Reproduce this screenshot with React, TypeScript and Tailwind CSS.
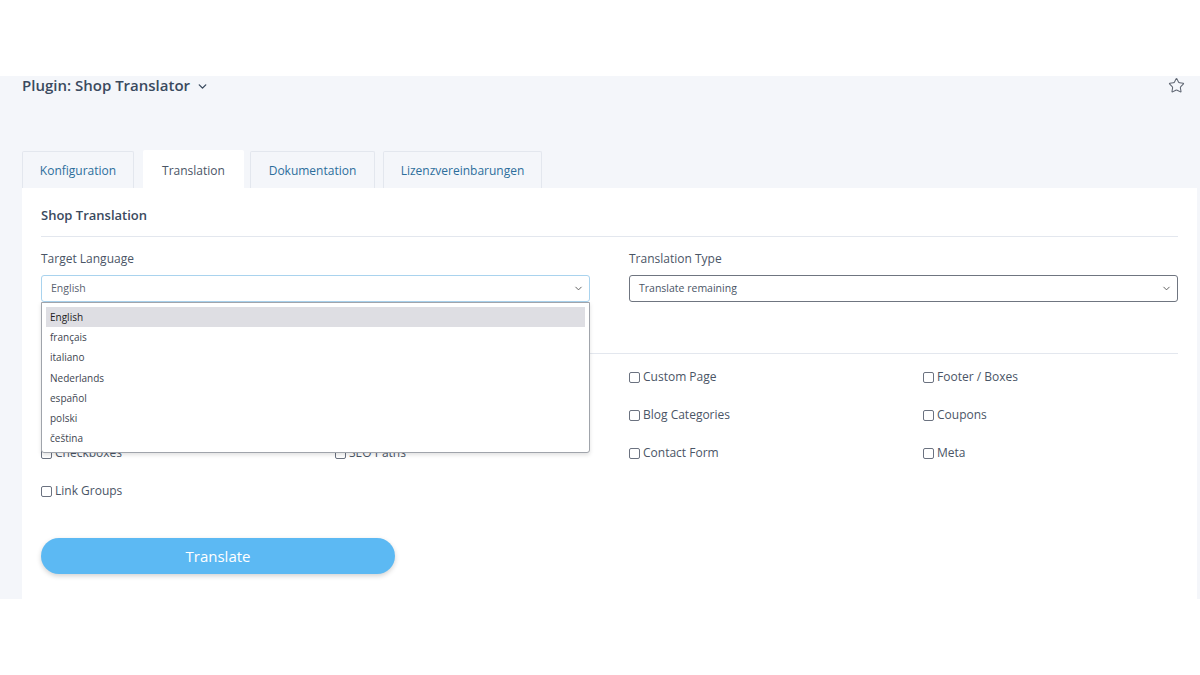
import React from "react";
import { Star, ChevronDown } from "lucide-react";

const checks: string[][] = [
  ["Products", "Categories", "Custom Page", "Footer / Boxes"],
  ["Attributes", "Manufacturers", "Blog Categories", "Coupons"],
  ["Checkboxes", "SEO Paths", "Contact Form", "Meta"],
  ["Link Groups"],
];

const hidden = new Set(["Products", "Categories", "Attributes", "Manufacturers"]);

const langs = ["English", "français", "italiano", "Nederlands", "español", "polski", "čeština"];

function Check({ label }: { label: string }) {
  return (
    <label
      className={
        "flex items-center gap-[3px] h-5 text-[12px] text-[#4a5566] " + (hidden.has(label) ? "invisible" : "")
      }
    >
      <span className="inline-block w-[11px] h-[11px] border border-[#6b7280] rounded-[2px] bg-white" />
      <span>{label}</span>
    </label>
  );
}

export default function App() {
  return (
    <div
      className="w-[1200px] h-[675px] bg-white overflow-hidden"
      style={{ fontFamily: '"Open Sans", "Noto Sans", sans-serif' }}
    >
      <div className="h-[76px]" />
      <div className="bg-[#f4f6fa] h-[523px] pl-[22px] pr-[3px]">
        <div className="h-[75px] flex items-start justify-between">
          <div className="flex items-center gap-[6px] h-[20px] mt-[-1px] text-[15px] font-semibold text-[#3a4a5e]">
            <span>Plugin: Shop Translator</span>
            <ChevronDown size={13} strokeWidth={2.5} className="mt-[2px]" />
          </div>
          <Star size={17} strokeWidth={1.5} className="text-[#5f6672] mr-[12px] mt-[1px]" />
        </div>
        <div className="flex items-end h-[37px] text-[12px]">
          <div className="w-[112px] h-[37px] flex items-center justify-center pt-[2px] bg-[#f4f6fa] border border-b-0 border-[#e3e7ee] text-[#2c6e9c] rounded-t-[2px]">
            Konfiguration
          </div>
          <div className="ml-[9px] w-[101px] h-[38px] flex items-center justify-center pt-[3px] bg-white text-[#4a5566] rounded-t-[2px]">
            Translation
          </div>
          <div className="ml-[6px] w-[125px] h-[37px] flex items-center justify-center pt-[2px] bg-[#f4f6fa] border border-b-0 border-[#e3e7ee] text-[#2c6e9c] rounded-t-[2px]">
            Dokumentation
          </div>
          <div className="ml-[8px] w-[159px] h-[37px] flex items-center justify-center pt-[2px] bg-[#f4f6fa] border border-b-0 border-[#e3e7ee] text-[#2c6e9c] rounded-t-[2px]">
            Lizenzvereinbarungen
          </div>
        </div>
        <div className="bg-white h-[411px] px-[19px] pt-[17px]">
          <div className="h-[20px] leading-[20px] text-[13px] font-semibold text-[#3a4a5e]">Shop Translation</div>
          <div className="mt-[11px] border-t border-[#e3e7ee]" />
          <div className="grid grid-cols-2 gap-x-[39px] mt-[13px]">
            <div className="relative">
              <div className="h-[18px] leading-[18px] text-[12px] text-[#4a5566]">Target Language</div>
              <div className="mt-[7px] h-[27px] border border-[#a9d3ee] rounded-[3px] flex items-center justify-between pl-[9px] pr-[5px] text-[10.5px] text-[#5a6270]">
                <span>English</span>
                <ChevronDown size={11} strokeWidth={2} className="text-[#555]" />
              </div>
              <div className="absolute left-0 right-0 top-[52px] z-10 bg-white border border-[#a0a4ab] rounded-b-[3px] shadow-[0_2px_4px_rgba(0,0,0,0.12)] p-[4px] pb-[3px]">
                {langs.map((l, i) => (
                  <div
                    key={l}
                    className={
                      "h-[20.3px] flex items-center pl-[4px] text-[10px] " +
                      (i === 0 ? "bg-[#dedee3] text-[#222]" : "text-[#3e4550]")
                    }
                  >
                    {l}
                  </div>
                ))}
              </div>
            </div>
            <div>
              <div className="h-[18px] leading-[18px] text-[12px] text-[#4a5566]">Translation Type</div>
              <div className="mt-[7px] h-[27px] border border-[#6f7580] rounded-[3px] flex items-center justify-between pl-[9px] pr-[5px] text-[10.5px] text-[#4a5566]">
                <span>Translate remaining</span>
                <ChevronDown size={11} strokeWidth={2} className="text-[#555]" />
              </div>
            </div>
          </div>
          <div className="mt-[51px] border-t border-[#e3e7ee]" />
          <div className="mt-[13px] grid grid-cols-4 gap-x-[39px] gap-y-[18px]">
            {checks.flat().map((c) => (
              <Check key={c} label={c} />
            ))}
          </div>
          <button className="mt-[37px] w-[354px] h-[36px] rounded-full bg-[#5cb9f3] text-white text-[15px] shadow-[0_2px_5px_rgba(0,0,0,0.18)]">
            Translate
          </button>
        </div>
      </div>
    </div>
  );
}
